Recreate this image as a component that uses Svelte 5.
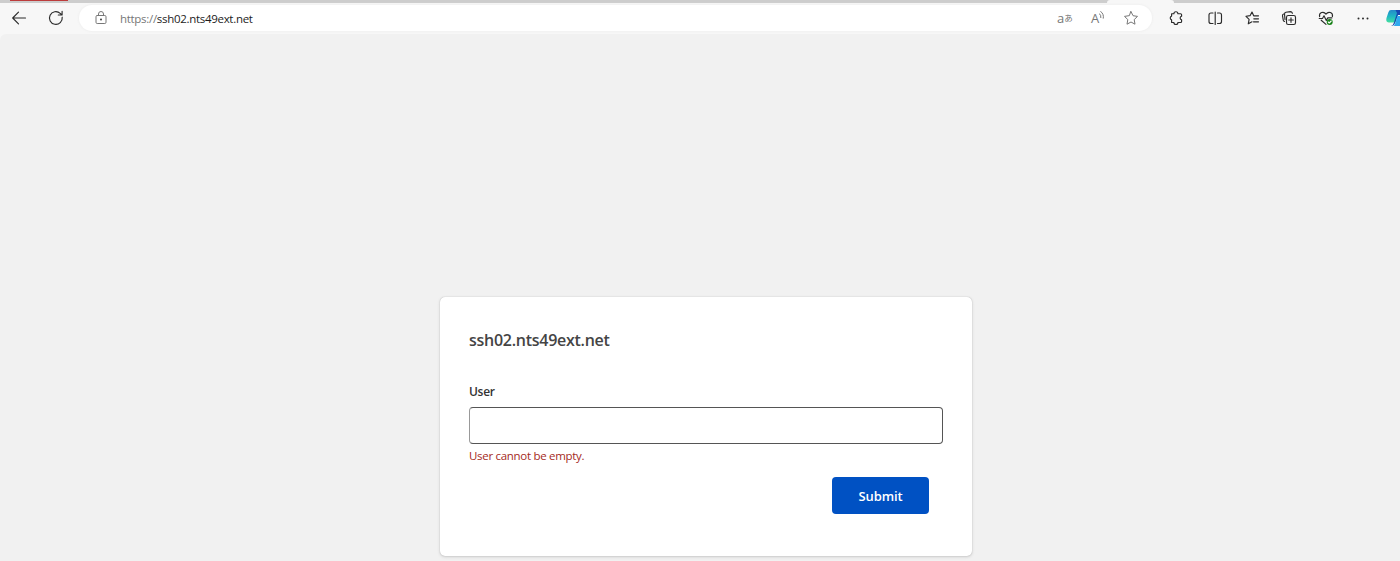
<script>
    let user = '';
    let error = 'User cannot be empty.';
    const submit = () => {
        error = user ? '' : 'User cannot be empty.';
    }
</script>

<div class="window">
    <div class="tabs">
        <span class="marker"></span>
        <span class="activeTab"></span>
    </div>

    <div class="toolbar">
        <button class="tool" aria-label="Back">
            <svg width="16" height="16" viewBox="0 0 16 16"><path d="M14.5 8H2M7.5 2.2L1.7 8l5.8 5.8" /></svg>
        </button>
        <button class="tool" aria-label="Refresh">
            <svg width="16" height="16" viewBox="0 0 16 16"><path d="M14.2 7.2a6.4 6.4 0 1 1-2-3.9L14 5M14.1 1.3V5h-3.8" /></svg>
        </button>
        <div class="address">
            <svg class="lock" width="14" height="14" viewBox="0 0 14 14"><rect x="2" y="4.5" width="10" height="8" rx="1.2" /><path d="M4.5 4.5V3a2.5 2.5 0 0 1 5 0v1.5" /><circle class="dot" cx="7" cy="8.5" r=".9" /></svg>
            <span class="url"><span>https://</span>ssh02.nts49ext.net</span>
            <span class="translate">a<small>あ</small></span>
            <span class="read">A<svg width="6" height="10" viewBox="0 0 6 10"><path d="M.3 2.6q2 1.3 1.6 4M1.7.5q3.4 2.3 2.6 6.7" /></svg></span>
            <svg class="star" width="16" height="16" viewBox="0 0 16 16"><path d="M8 1.6l2 4.1 4.5.7-3.3 3.2.8 4.6-4-2.2-4 2.2.8-4.6-3.3-3.2 4.5-.7z" /></svg>
        </div>
        <button class="tool extensions" aria-label="Extensions">
            <svg width="16" height="16" viewBox="0 0 16 16"><path d="M3.6 3.7h2.3a2 2 0 0 1 4 0h2.7q1 0 1 1v1.5a1.9 1.9 0 0 0 0 3.7v1.6q0 1-1 1H9.9a2 2 0 0 1-4 0H3.6V9.9a2 2 0 0 1 0-3.8z" /></svg>
        </button>
        <span class="divider"></span>
        <button class="tool" aria-label="Split screen">
            <svg width="16" height="16" viewBox="0 0 16 16"><path d="M6 3H4a2 2 0 0 0-2 2v6.5a2 2 0 0 0 2 2h2M10.5 3h2a2 2 0 0 1 2 2v6.5a2 2 0 0 1-2 2h-2M8.2 2v12.5" /></svg>
        </button>
        <button class="tool" aria-label="Favorites">
            <svg width="16" height="16" viewBox="0 0 16 16"><path d="M14.5 5.8H9.7L8 2 6.2 5.6l-4.2.7 3.1 3-.8 4.5 3.7-2M9.8 8.8h4.7M9.5 11.8h5" /></svg>
        </button>
        <button class="tool" aria-label="Collections">
            <svg width="16" height="16" viewBox="0 0 16 16"><rect x="5.5" y="5.5" width="9" height="9" rx="1.8" /><path d="M10 7.7v4.6M7.7 10h4.6M3.5 11.4q-1 0-1.2-1L1.5 5.8q-.2-1.4 1-1.8M4 9.5L3.5 4q0-1.5 1.4-1.8l4.5-.6q1.4 0 2 1.7" /></svg>
        </button>
        <button class="tool" aria-label="Browser essentials">
            <svg width="16" height="16" viewBox="0 0 16 16"><path d="M1.6 6.7C.7 2.5 5.6.8 8 4.1c2.4-3.3 7.3-1.6 6.4 2.6M3.2 10.2L8 14.4M1.2 8.5h3.3L6 5.8l2.3 4.6 1.5-2.5h4" /><circle class="green" cx="11.7" cy="12" r="3" /><path class="check" d="M10.3 12l1 1 1.9-2" /></svg>
        </button>
        <button class="tool" aria-label="More">
            <svg width="16" height="16" viewBox="0 0 16 16"><circle class="dot" cx="3.5" cy="8.5" r="1" /><circle class="dot" cx="8" cy="8.5" r="1" /><circle class="dot" cx="12.5" cy="8.5" r="1" /></svg>
        </button>
        <svg class="copilot" width="14" height="18" viewBox="0 0 14 18">
            <defs>
                <linearGradient id="wave" x1="0" y1="0" x2="0" y2="1">
                    <stop offset="0" stop-color="#2489c9" />
                    <stop offset=".5" stop-color="#20b6c4" />
                    <stop offset="1" stop-color="#43df9e" />
                </linearGradient>
            </defs>
            <path fill="url(#wave)" d="M5 1h9L9.5 13.5H3Q-.5 13.5.5 9L2.3 3.4Q3 1 5 1z" />
            <path fill="#1748b1" d="M9.5 1H14v5h-2.2L9 14.3Q8 17.5 5.2 17q2-.5 2.8-3.4L11 4z" />
            <path fill="#30a9ee" d="M11.5 7H14v10H7.5q1.4-.8 1.9-3z" />
        </svg>
    </div>

    <div class="page">
        <div class="card">
            <h1>ssh02.nts49ext.net</h1>
            <label for="user">User</label>
            <input id="user" type="text" bind:value={user} />
            <p class="error">{error}</p>
            <button class="submit" on:click={submit}>Submit</button>
        </div>
    </div>
</div>

<style>
    .window {
        display: flex;
        flex-direction: column;
        height: 561px;
        overflow: hidden;
        background: #f7f7f7;
        font-family: "Open Sans", "Noto Sans", "Noto Sans CJK JP", sans-serif;
    }
    button {
        border: none;
        padding: 0;
        font-family: inherit;
    }
    svg {
        display: block;
        flex: none;
        fill: none;
        stroke: #2b2b2b;
        stroke-width: 1.15;
        stroke-linejoin: round;
        stroke-linecap: round;
    }
    .tabs {
        display: flex;
        height: 3px;
        background: #cdcdcd;
    }
    .marker {
        width: 58px;
        height: 1px;
        margin-left: 10px;
        background: #bd3c3c;
    }
    .activeTab {
        width: 67px;
        margin-left: 1039px;
        background: #f7f7f7;
        border-radius: 3px 3px 0 0;
    }
    .toolbar {
        display: flex;
        align-items: center;
        height: 30px;
        padding-bottom: 1px;
    }
    .tool {
        display: flex;
        flex: none;
        justify-content: center;
        align-items: center;
        width: 37px;
        height: 30px;
        background: none;
    }
    .address {
        display: flex;
        flex: none;
        align-items: center;
        box-sizing: border-box;
        width: 1073px;
        height: 26px;
        margin-left: 5px;
        padding: 0 13px 0 15px;
        border-radius: 13px;
        background: #fff;
        box-shadow: 0 0 3px #eaeaea;
    }
    .address svg {
        stroke: #777;
        stroke-width: 1;
    }
    .url {
        flex: 1;
        margin-left: 12px;
        font-size: 11.5px;
        letter-spacing: -0.3px;
        color: #1c1c1c;
    }
    .url span {
        color: #777;
    }
    .translate {
        display: flex;
        align-items: center;
        width: 15px;
        margin-right: 19px;
        font-size: 13px;
        line-height: 14px;
        color: #777;
    }
    .translate small {
        font-size: 8.5px;
    }
    .read {
        display: flex;
        width: 14px;
        margin-right: 18px;
        font-size: 13px;
        line-height: 14px;
        color: #777;
    }
    .extensions {
        margin-left: 5px;
    }
    .divider {
        width: 1px;
        height: 13px;
        margin: 0 1px;
        background: #ccc;
    }
    .dot {
        fill: #2b2b2b;
        stroke: none;
    }
    .green {
        fill: #178017;
        stroke: none;
    }
    .check {
        stroke: #fff;
    }
    .copilot {
        margin-left: 5px;
        stroke: none;
    }
    .page {
        display: flex;
        flex: 1;
        justify-content: center;
        align-items: flex-end;
        padding: 0 0 5px 12px;
        border-radius: 6px 0 0 0;
        background: #f1f1f1;
    }
    .card {
        display: flex;
        flex-direction: column;
        box-sizing: border-box;
        width: 532px;
        height: 259px;
        padding: 30px 29px 0;
        border-radius: 5px;
        background: #fff;
        box-shadow: 0 0 1px #aaa, 0 1px 3px #ccc;
    }
    h1 {
        margin: 0;
        font-size: 16px;
        line-height: 26px;
        font-weight: 600;
        letter-spacing: -0.27px;
        color: #444;
    }
    label {
        margin-top: 29px;
        font-size: 12px;
        line-height: 20px;
        font-weight: 600;
        letter-spacing: -0.3px;
        color: #333;
    }
    input {
        box-sizing: border-box;
        width: 474px;
        height: 37px;
        margin: 5px 0 0;
        padding: 0 10px;
        border: 1px solid #555;
        border-left-color: #999;
        border-radius: 4px;
        background: #fff;
        font-size: 13px;
    }
    .error {
        height: 18px;
        margin: 3px 0 0;
        font-size: 11.5px;
        line-height: 18px;
        letter-spacing: -0.3px;
        color: #a52a24;
    }
    .submit {
        align-self: flex-end;
        width: 97px;
        height: 37px;
        margin: 12px 14px 0 0;
        border-radius: 4px;
        background: #0051c3;
        color: #fff;
        font-size: 13px;
        font-weight: 600;
        letter-spacing: -0.15px;
        cursor: pointer;
    }
</style>
